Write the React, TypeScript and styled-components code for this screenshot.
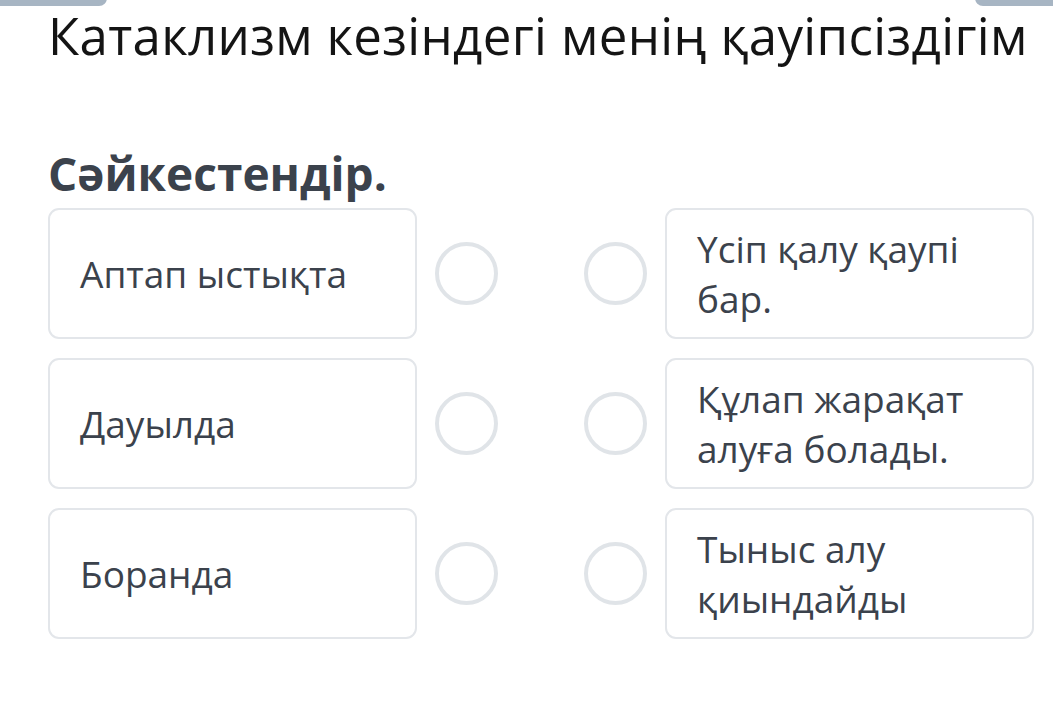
import React from 'react';
import styled, { createGlobalStyle } from 'styled-components';

const GlobalStyle = createGlobalStyle`
  html, body {
    margin: 0;
    padding: 0;
    background: #ffffff;
    font-family: "Open Sans", "Noto Sans", sans-serif;
  }
`;

const Page = styled.div`
  width: 1053px;
  height: 713px;
  overflow: hidden;
  position: relative;
  background: #fff;
`;

// the two grey tabs peeking in at the top edge
const TopTab = styled.div<{ side: 'left' | 'right' }>`
  position: absolute;
  top: -10px;
  height: 16px;
  background: #a7b5c3;
  border-radius: 8px;
  ${p => (p.side === 'left' ? 'left: -10px; width: 117px;' : 'right: -10px; width: 88px;')}
`;

const Content = styled.div`
  padding: 0 0 0 48px;
`;

const Title = styled.h1`
  margin: 0;
  font-family: "Open Sans", "Noto Sans", sans-serif;
  font-weight: 400;
  font-size: 51px;
  line-height: 70px;
  letter-spacing: 0.35px;
  color: #141414;
  white-space: nowrap;
`;

const Prompt = styled.h2`
  margin: 76px 0 0 0;
  font-family: "Open Sans", "Noto Sans", sans-serif;
  font-weight: 700;
  font-size: 46px;
  line-height: 54px;
  color: #3b424c;
`;

const Board = styled.div`
  margin-top: 8px;
  width: 986px;
  display: grid;
  grid-template-columns: 369px 1fr 1fr 369px;
  grid-auto-rows: 131px;
  row-gap: 19px;
`;

const Card = styled.div`
  box-sizing: border-box;
  border: 2px solid #e3e6ea;
  border-radius: 11px;
  display: flex;
  align-items: center;
  padding: 0 20px 0 30px;
  font-size: 37px;
  line-height: 50px;
  color: #3b424c;
`;

const DotCell = styled.div<{ side: 'left' | 'right' }>`
  display: flex;
  align-items: center;
  justify-content: ${p => (p.side === 'left' ? 'flex-start' : 'flex-end')};
  padding: 0 18px;
`;

const Dot = styled.div`
  box-sizing: border-box;
  width: 63px;
  height: 63px;
  border-radius: 50%;
  border: 4px solid #e0e4e8;
`;

const rows = [
  ['Аптап ыстықта', 'Үсіп қалу қаупі бар.'],
  ['Дауылда', 'Құлап жарақат алуға болады.'],
  ['Боранда', 'Тыныс алу қиындайды'],
];

export default function App() {
  return (
    <Page>
      <GlobalStyle />
      <TopTab side="left" />
      <TopTab side="right" />
      <Content>
        <Title>Катаклизм кезіндегі менің қауіпсіздігім</Title>
        <Prompt>Сәйкестендір.</Prompt>
        <Board>
          {rows.map(([l, r]) => (
            <React.Fragment key={l}>
              <Card>{l}</Card>
              <DotCell side="left">
                <Dot />
              </DotCell>
              <DotCell side="right">
                <Dot />
              </DotCell>
              <Card>{r}</Card>
            </React.Fragment>
          ))}
        </Board>
      </Content>
    </Page>
  );
}
